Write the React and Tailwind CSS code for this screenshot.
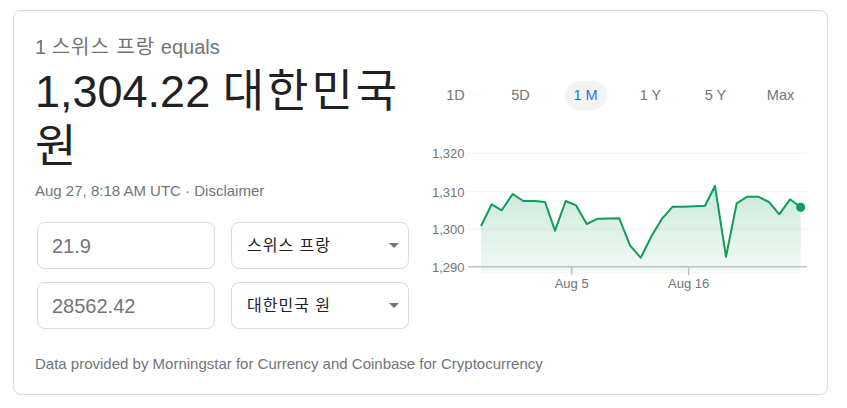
import React from 'react';

const points = [
    [481, 226], [491.7, 204.3], [501.7, 210.3], [512.7, 194], [523.3, 201],
    [535, 201], [545, 202], [555, 230.7], [565.7, 201], [576, 205.3],
    [586.7, 224], [597.7, 218.7], [619.3, 218.3], [630, 245.3], [640.7, 257.7],
    [651.7, 235.7], [662.3, 218.3], [672.7, 206.7], [683.3, 206.7], [705, 205.7],
    [715, 186], [726, 256.7], [736.7, 203.3], [747.3, 196.7], [758.3, 196.7],
    [769, 202], [779.3, 214.3], [790, 199.3], [800.7, 207.3]
].map(([x, y]) => [x - 423, y - 120]);

function Chart() {
    const line = points.map(([x, y]) => `${x},${y}`).join(' ');
    const first = points[0];
    const last = points[points.length - 1];
    const area = `${first[0]},153.3 ${line} ${last[0]},153.3`;
    const grid = [
        { y: 33.3, label: '1,320' },
        { y: 71.7, label: '1,310' },
        { y: 109.3, label: '1,300' },
        { y: 146.7, label: '1,290' }
    ];

    return (
        <svg width="390" height="180" className="block">
            <defs>
                <linearGradient id="fill" x1="0" y1="0" x2="0" y2="1">
                    <stop offset="0%" stopColor="#0f9d58" stopOpacity="0.22" />
                    <stop offset="100%" stopColor="#0f9d58" stopOpacity="0.05" />
                </linearGradient>
            </defs>
            {grid.slice(0, 3).map((g) => (
                <line key={g.label} x1="45" x2="384" y1={g.y} y2={g.y} stroke="#f1f3f4" strokeWidth="1" />
            ))}
            <polygon points={area} fill="url(#fill)" />
            <line x1="45" x2="384" y1="146.7" y2="146.7" stroke="#bdc1c6" strokeWidth="1.5" />
            <line x1="148.7" x2="148.7" y1="146.7" y2="155" stroke="#bdc1c6" strokeWidth="1.5" />
            <line x1="265.7" x2="265.7" y1="146.7" y2="155" stroke="#bdc1c6" strokeWidth="1.5" />
            <polyline points={line} fill="none" stroke="#0f9d58" strokeWidth="2" strokeLinejoin="round" />
            <circle cx={last[0]} cy={last[1]} r="4.5" fill="#0f9d58" />
            {grid.map((g) => (
                <text key={g.label} x="41.5" y={g.y + 5} textAnchor="end" fontSize="13" fill="#70757a">
                    {g.label}
                </text>
            ))}
            <text x="148.7" y="167.5" textAnchor="middle" fontSize="13" fill="#70757a">Aug 5</text>
            <text x="265.7" y="167.5" textAnchor="middle" fontSize="13" fill="#70757a">Aug 16</text>
        </svg>
    );
}

function Arrow() {
    return (
        <span className="w-0 h-0 border-l-[5px] border-r-[5px] border-t-[5px] border-l-transparent border-r-transparent border-t-[#70757a]" />
    );
}

export default function App() {
    const tabs = ['1D', '5D', '1 M', '1 Y', '5 Y', 'Max'];

    return (
        <div
            className="bg-white w-[847px] h-[408px] pl-[13px] pt-[10px]"
            style={{ fontFamily: '"Liberation Sans", Arial, "Noto Sans CJK KR", sans-serif' }}
        >
            <div className="w-[815px] h-[385px] border border-[#dadce0] rounded-[8px] pl-[21px] pr-[13px] pt-[24px]">
                <div className="flex items-start gap-[13px]">
                    {/* Left */}
                    <div className="w-[375px] flex flex-col">
                        <div className="text-[20px] leading-[25px] text-[#70757a]">
                            1 <span className="tracking-[1px]">스위스 프랑</span> equals
                        </div>
                        <div className="mt-[4px] text-[45px] leading-[55px] text-[#202124]">
                            1,304.22 <span className="tracking-[3px]">대한민국</span>{' '}
                            <span className="tracking-[3px]">원</span>
                        </div>
                        <div className="mt-[7px] text-[15px] leading-[20px] text-[#70757a]">
                            Aug 27, 8:18 AM UTC · Disclaimer
                        </div>
                        <div className="mt-[21px] ml-[2px] grid grid-cols-[178px_178px] gap-x-[16px] gap-y-[13px]">
                            <div className="h-[47px] border border-[#dadce0] rounded-[8px] pl-[14px] flex items-center text-[20px] text-[#70757a]">
                                21.9
                            </div>
                            <div className="h-[47px] border border-[#dadce0] rounded-[8px] pl-[15px] pr-[9px] flex items-center justify-between text-[16px] text-[#202124]">
                                <span className="tracking-[1px]">스위스 프랑</span>
                                <Arrow />
                            </div>
                            <div className="h-[47px] border border-[#dadce0] rounded-[8px] pl-[14px] flex items-center text-[20px] text-[#70757a]">
                                28562.42
                            </div>
                            <div className="h-[47px] border border-[#dadce0] rounded-[8px] pl-[15px] pr-[9px] flex items-center justify-between text-[16px] text-[#202124]">
                                <span className="tracking-[1px]">대한민국 원</span>
                                <Arrow />
                            </div>
                        </div>
                    </div>

                    {/* Right */}
                    <div className="w-[390px] flex flex-col">
                        <div className="mt-[46px] grid grid-cols-6 h-[29px]">
                            {tabs.map((t) => (
                                <div key={t} className="flex items-center justify-center">
                                    {t === '1 M' ? (
                                        <span className="w-[42px] h-[29px] rounded-full bg-[#f1f3f4] flex items-center justify-center text-[14.5px] text-[#1a73e8]">
                                            {t}
                                        </span>
                                    ) : (
                                        <span className="text-[14.5px] text-[#70757a]">{t}</span>
                                    )}
                                </div>
                            ))}
                        </div>
                        <div className="mt-[10px]">
                            <Chart />
                        </div>
                    </div>
                </div>

                <div className="mt-[25px] text-[15px] leading-[20px] text-[#70757a]">
                    Data provided by Morningstar for Currency and Coinbase for Cryptocurrency
                </div>
            </div>
        </div>
    );
}
